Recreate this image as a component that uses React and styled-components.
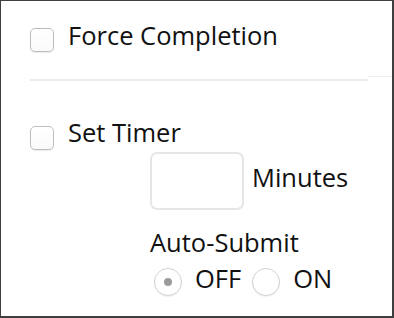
import React from "react";
import styled, { createGlobalStyle } from "styled-components";

const Global = createGlobalStyle`
  html, body { margin: 0; padding: 0; background: #fff; }
  body { font-family: "Open Sans", "Liberation Sans", sans-serif; color: #111; }
  * { box-sizing: border-box; }
`;

const Frame = styled.div`
  width: 394px;
  height: 318px;
  border-style: solid;
  border-color: #3f3f3f;
  border-width: 1px 2px 2px 1px;
  padding: 0 0 0 29px;
  display: flex;
  flex-direction: column;
  overflow: hidden;
`;

const Row = styled.label`
  display: flex;
  align-items: flex-start;
  gap: 14px;
  height: 32px;
  margin-top: ${(p) => p.$top}px;
`;

const Box = styled.span`
  flex: none;
  width: 24px;
  height: 24px;
  margin-top: ${(p) => p.$offset}px;
  border: 1px solid #bdbdbd;
  border-radius: 5px;
  background: linear-gradient(#fff, #fafafa);
  box-shadow: 0 1px 1px rgba(0, 0, 0, 0.08);
`;

const Label = styled.span`
  font-size: 25.5px;
  line-height: 32px;
  white-space: nowrap;
`;

const Divider = styled.div`
  display: flex;
  align-items: flex-start;
  margin-top: ${(p) => p.$top}px;
`;

const DividerMain = styled.div`
  width: 338px;
  height: 2px;
  margin-top: 4px;
  background: #ececec;
`;

const DividerTail = styled.div`
  flex: 1;
  height: 1px;
  margin-top: 1px;
  background: #efefef;
`;

const Nested = styled.div`
  display: flex;
  flex-direction: column;
  margin-left: 120px;
`;

const InputRow = styled.div`
  display: flex;
  align-items: center;
  gap: 8px;
  margin-top: 4px;
`;

const NumberBox = styled.div`
  width: 94px;
  height: 58px;
  border: 2px solid #e6e6e6;
  border-radius: 7px;
  background: #fff;
`;

const Unit = styled.span`
  font-size: 25.5px;
  line-height: 32px;
  margin-top: -8px;
`;

const Heading = styled.div`
  font-size: 25.5px;
  line-height: 32px;
  margin-top: 16px;
  white-space: nowrap;
`;

const RadioRow = styled.div`
  display: flex;
  align-items: flex-start;
  margin-top: 4px;
`;

const RadioOption = styled.label`
  display: flex;
  align-items: flex-start;
  gap: 13px;
  margin-left: ${(p) => p.$gap}px;
`;

const Circle = styled.span`
  flex: none;
  width: 28px;
  height: 28px;
  margin-top: 6px;
  border-radius: 50%;
  border: 1px solid #d2d2d2;
  background: #fff;
  box-shadow: 0 1px 1px rgba(0, 0, 0, 0.06);
  display: flex;
  align-items: center;
  justify-content: center;

  &::after {
    content: "";
    display: ${(p) => (p.$checked ? "block" : "none")};
    width: 8px;
    height: 8px;
    border-radius: 50%;
    background: #9b9b9b;
  }
`;

export default function App() {
  return (
    <>
      <Global />
      <Frame>
        <Row $top={18}>
          <Box $offset={9} />
          <Label>Force Completion</Label>
        </Row>
        <Divider $top={24}>
          <DividerMain />
          <DividerTail />
        </Divider>
        <Row $top={35}>
          <Box $offset={10} />
          <Label>Set Timer</Label>
        </Row>
        <Nested>
          <InputRow>
            <NumberBox />
            <Unit>Minutes</Unit>
          </InputRow>
          <Heading>Auto-Submit</Heading>
          <RadioRow>
            <RadioOption $gap={4}>
              <Circle $checked />
              <Label>OFF</Label>
            </RadioOption>
            <RadioOption $gap={11}>
              <Circle />
              <Label>ON</Label>
            </RadioOption>
          </RadioRow>
        </Nested>
      </Frame>
    </>
  );
}
